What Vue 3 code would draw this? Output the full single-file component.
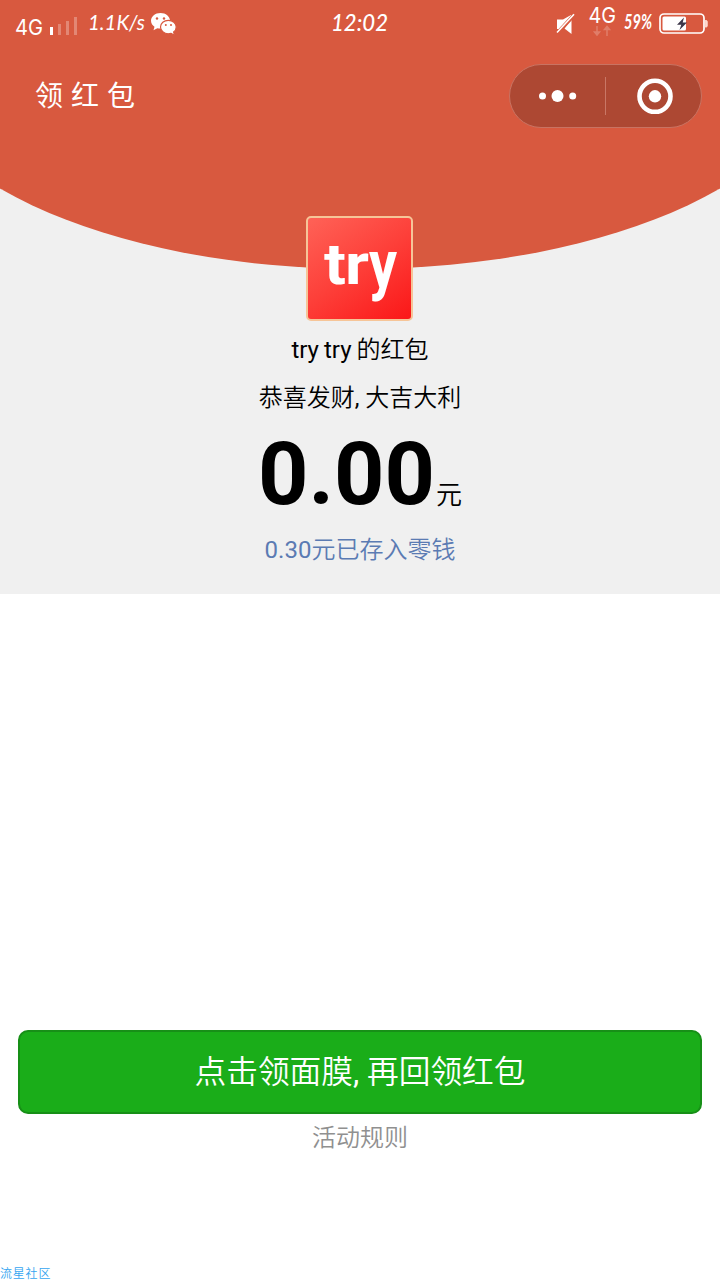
<script setup>
const bars = [
  { x: 0, y: 10, h: 8, o: 1 },
  { x: 8, y: 7, h: 11, o: 0.28 },
  { x: 16, y: 4, h: 14, o: 0.28 },
  { x: 24, y: 0, h: 18, o: 0.28 },
]
</script>

<template>
  <main class="screen">
    <section class="hero">
      <svg class="arc" width="720" height="270" viewBox="0 0 720 270">
        <rect width="720" height="100" fill="#d8593f" />
        <ellipse cx="360" cy="51" rx="464" ry="218" fill="#d8593f" />
      </svg>

      <header class="status">
        <svg class="st-left" width="180" height="48" viewBox="0 0 180 48">
          <text class="sans" x="15" y="35" font-size="22" textLength="28" lengthAdjust="spacingAndGlyphs">4G</text>
          <g transform="translate(50 17)">
            <rect v-for="b in bars" :key="b.x" :x="b.x" :y="b.y" width="3" :height="b.h" fill="#fff" :opacity="b.o" />
          </g>
          <text class="hand" font-size="21" x="88" y="29.500" textLength="57" lengthAdjust="spacingAndGlyphs">1.1K/s</text>
          <path d="M160.500 13c-5.300 0-9.500 3.400-9.500 7.800 0 2.500 1.400 4.600 3.500 6l-1 3.500 3.900-2.100c1 .2 2 .4 3.100.4 5.300 0 9.500-3.500 9.500-7.800s-4.200-7.800-9.500-7.800z" fill="#fff" />
          <path d="M168.300 20.300c-4.300 0-7.800 3-7.800 6.700s3.500 6.800 7.800 6.800c1 0 2-.2 2.800-.5l3.400 1.900-.9-3.100c1.600-1.200 2.600-3 2.600-5.100 0-3.700-3.500-6.700-7.900-6.700z" fill="#fff" stroke="#d8593f" stroke-width="1.200" />
          <g fill="#d8593f">
            <circle cx="157" cy="18.500" r="1.200" /><circle cx="164" cy="18.500" r="1.200" />
            <circle cx="165.800" cy="25" r="1" /><circle cx="171" cy="25" r="1" />
          </g>
        </svg>

        <svg class="st-time" width="60" height="48" viewBox="0 0 60 48">
          <text class="hand time" font-size="23" x="1" y="31" textLength="57" lengthAdjust="spacingAndGlyphs">12:02</text>
        </svg>

        <svg class="st-right" width="170" height="48" viewBox="550 0 170 48">
          <path d="M557 19.500v9.500l3 0 11-12.500V15l-8 4.500z" fill="#fff" />
          <path d="M571.500 19v15l-7-5.500z" fill="#fff" />
          <path d="M557.500 33L574.500 14.500" stroke="#d8593f" stroke-width="4" />
          <path d="M557 32.500L574 14.300" stroke="#fff" stroke-width="1.600" />
          <text class="sans" x="588.500" y="23" font-size="22" textLength="27.500" lengthAdjust="spacingAndGlyphs">4G</text>
          <g stroke="#fff" stroke-width="1.500" opacity=".22" fill="#fff">
            <path d="M597 26v7" /><path d="M594.500 32h5l-2.500 3z" />
            <path d="M607 28v8" /><path d="M604.500 29.500h5l-2.500-3z" />
          </g>
          <text class="hand pct" x="624" y="29" font-size="20" textLength="28" lengthAdjust="spacingAndGlyphs">59%</text>
          <rect x="660" y="14" width="44" height="19" rx="4" fill="none" stroke="#fff" stroke-width="1.700" />
          <rect x="662.500" y="16.500" width="23.500" height="14" rx="1.500" fill="#fff" />
          <path d="M705.200 20.500h1q1 0 1 1v4.500q0 1-1 1h-1z" fill="#ffd9cf" stroke="#ffd9cf" />
          <path d="M684 17.500l-7 7.200h4.300L679.500 30l7.500-7.500h-4.300z" fill="#3b3548" />
        </svg>
      </header>

      <nav class="nav">
        <h1 class="nav-title">领红包</h1>
        <div class="capsule">
          <svg width="192" height="64" viewBox="0 0 192 64">
            <g fill="#fff">
              <circle cx="33.500" cy="32" r="3.500" /><circle cx="48.500" cy="32" r="6" /><circle cx="63.700" cy="32" r="3.500" />
              <circle cx="146" cy="32.300" r="6.200" />
            </g>
            <path d="M96.500 13v38" stroke="#c97766" stroke-width="1" />
            <circle cx="146" cy="32.300" r="15.500" fill="none" stroke="#fff" stroke-width="4.600" />
          </svg>
        </div>
      </nav>

      <div class="logo">
        <svg width="103" height="102" viewBox="308 218 103 102">
          <g class="brand">
            <text x="324" y="283.500" font-size="58" textLength="22" lengthAdjust="spacingAndGlyphs">t</text>
            <text x="345" y="283.500" font-size="58" textLength="24" lengthAdjust="spacingAndGlyphs">r</text>
            <text x="369" y="286.500" font-size="66" textLength="28" lengthAdjust="spacingAndGlyphs">y</text>
          </g>
        </svg>
      </div>
      <p class="line owner"><span class="latin">try try </span>的红包</p>
      <p class="line wish">恭喜发财<span class="latin">, </span>大吉大利</p>
      <p class="amount"><strong>0.00</strong><span>元</span></p>
      <p class="saved"><span class="latin">0.30</span>元已存入零钱</p>
    </section>

    <section class="actions">
      <button class="go">点击领面膜<span class="latin">, </span>再回领红包</button>
      <a class="rules">活动规则</a>
    </section>
    <footer class="mark">流星社区</footer>
  </main>
</template>

<style>
body { margin: 0; background: #fff; }
</style>

<style scoped>
.screen {
  width: 720px;
  height: 1280px;
  display: flex;
  flex-direction: column;
  overflow: hidden;
  background: #fff;
  color: #000;
  font-family: Roboto, "Noto Sans CJK SC", sans-serif;
  font-weight: 350;
}
.latin { font-weight: 400; }
.hero {
  position: relative;
  height: 594px;
  flex: none;
  background: #f0f0f0;
  display: flex;
  flex-direction: column;
  align-items: center;
}
.arc { position: absolute; top: 0; left: 0; }
.status, .nav, .logo { position: relative; }
.status {
  width: 720px;
  height: 48px;
  display: grid;
  grid-template-columns: 330px 220px 170px;
}
.status svg { display: block; }
.status text { fill: #fff; }
.sans { font-family: Inter, sans-serif; font-weight: 400; }
.hand { font-family: Lato, sans-serif; font-style: italic; font-weight: 400; }
.time { font-weight: 500; }
.pct { font-weight: 700; }
.nav {
  box-sizing: border-box;
  width: 720px;
  height: 96px;
  padding: 16px 18px 0 35px;
  display: flex;
  justify-content: space-between;
}
.nav-title {
  margin: 0;
  color: #fff;
  font-size: 28px;
  line-height: 66px;
  font-weight: 400;
  letter-spacing: 8px;
}
.capsule {
  box-sizing: border-box;
  width: 193px;
  height: 64px;
  border: 1px solid #c97362;
  border-radius: 32px;
  background: #ad4833;
  overflow: hidden;
}
.capsule svg { display: block; margin: -1px; }
.logo {
  box-sizing: border-box;
  width: 107px;
  height: 105px;
  margin: 72px 1px 0 0;
  border: 2px solid #f6c598;
  border-radius: 5px;
  background: linear-gradient(145deg, #ff6257, #fd3f39 50%, #fb1718);
}
.logo svg { display: block; }
.brand { font-family: Roboto, sans-serif; font-weight: 700; fill: #fff; }
p { margin: 0; white-space: nowrap; }
.line { font-size: 24px; line-height: 48px; height: 48px; }
.owner { margin-top: 5px; word-spacing: -.9px; }
.amount {
  height: 104px;
  display: flex;
  align-items: baseline;
  line-height: 104px;
}
.amount strong { font-size: 88px; font-weight: 700; }
.amount span { font-size: 26px; margin-left: 1px; }
.saved { color: #5b7bb3; font-size: 24px; line-height: 48px; }
.actions {
  margin-top: 436px;
  padding: 0 18px;
  display: flex;
  flex-direction: column;
  align-items: center;
}
.go {
  box-sizing: border-box;
  width: 684px;
  height: 84px;
  border: 2px solid #178f17;
  border-radius: 10px;
  background: #1aad19;
  color: #fff;
  font: 350 31.700px/80px Roboto, "Noto Sans CJK SC", sans-serif;
  padding: 1px 0 0;
}
.rules { color: #909090; font-size: 24px; line-height: 48px; }
.mark {
  margin-top: auto;
  color: #35a5f0;
  font-size: 12px;
  line-height: 11px;
  letter-spacing: .8px;
}
</style>
